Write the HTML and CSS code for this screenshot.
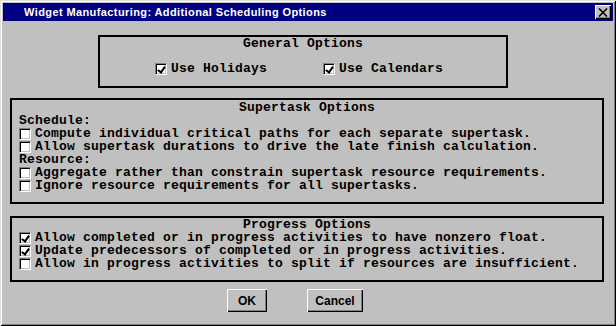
FILE: index.html
```html
<!DOCTYPE html>
<html lang="en">
    <head>
        <meta charset="utf-8">
        <title>Additional Scheduling Options</title>
        <link rel="stylesheet" href="styles.css">
    </head>
    <body>
        <div class="window">
            <div class="titleBar">
                <span class="titleText">Widget Manufacturing: Additional Scheduling Options</span>
                <span class="closeBtn">
                    <svg width="10" height="9" viewBox="0 0 10 9"><path d="M1 0.5 L9 8.5 M9 0.5 L1 8.5" stroke="#000" stroke-width="1.6"/></svg>
                </span>
            </div>

            <div class="content">
                <div class="group general">
                    <div class="groupTitle">General Options</div>
                    <div class="generalRow">
                        <label class="check"><span class="box checked"></span>Use Holidays</label>
                        <label class="check calendars"><span class="box checked"></span>Use Calendars</label>
                    </div>
                </div>

                <div class="group supertask">
                    <div class="groupTitle">Supertask Options</div>
                    <div class="line">Schedule:</div>
                    <label class="check"><span class="box"></span>Compute individual critical paths for each separate supertask.</label>
                    <label class="check"><span class="box"></span>Allow supertask durations to drive the late finish calculation.</label>
                    <div class="line">Resource:</div>
                    <label class="check"><span class="box"></span>Aggregate rather than constrain supertask resource requirements.</label>
                    <label class="check"><span class="box"></span>Ignore resource requirements for all supertasks.</label>
                </div>

                <div class="group progress">
                    <div class="groupTitle">Progress Options</div>
                    <label class="check"><span class="box checked"></span>Allow completed or in progress activities to have nonzero float.</label>
                    <label class="check"><span class="box checked"></span>Update predecessors of completed or in progress activities.</label>
                    <label class="check"><span class="box"></span>Allow in progress activities to split if resources are insufficient.</label>
                </div>

                <div class="buttonRow">
                    <button class="button ok" type="button">OK</button>
                    <button class="button cancel" type="button">Cancel</button>
                </div>
            </div>
        </div>
    </body>
</html>
```

FILE: styles.css
```css
* {
    box-sizing: border-box;
}

body {
    margin: 0;
    background-color: #c0c0c0;
}

.window {
    width: 616px;
    height: 326px;
    padding: 3px;
    background-color: #c0c0c0;
    box-shadow: inset 1px 1px #dfdfdf, inset -1px -1px #000000,
                inset 2px 2px #ffffff, inset -2px -2px #808080;
}

.titleBar {
    height: 18px;
    background-color: #000080;
    display: flex;
    align-items: center;
    justify-content: space-between;
    padding-left: 21px;
    padding-right: 2px;
}

.titleText {
    color: white;
    font-family: "Liberation Sans", Arial, sans-serif;
    font-weight: bold;
    font-size: 11px;
    letter-spacing: 0.4px;
}

.closeBtn {
    width: 16px;
    height: 14px;
    background-color: #c0c0c0;
    display: flex;
    align-items: center;
    justify-content: center;
    box-shadow: inset 1px 1px #ffffff, inset -1px -1px #000000,
                inset -2px -2px #808080;
}

.content {
    padding: 0 9px 0 7px;
    font-family: "Liberation Mono", "DejaVu Sans Mono", monospace;
    font-size: 13px;
    line-height: 13px;
    font-weight: bold;
    letter-spacing: 0.2px;
    color: black;
}

.group {
    border: 2px solid black;
}

.groupTitle {
    text-align: center;
    height: 13px;
}

.general {
    width: 410px;
    margin-top: 14px;
    margin-left: 88px;
    padding-bottom: 11px;
}

.generalRow {
    display: flex;
    margin-top: 12px;
    padding-left: 55px;
}

.calendars {
    margin-left: 56px;
}

.supertask {
    margin-top: 10px;
    padding: 1px 0 10px 7px;
}

.supertask .groupTitle {
    margin-left: -7px;
}

.progress {
    margin-top: 12px;
    padding: 0 0 10px 7px;
}

.progress .groupTitle {
    margin-left: -7px;
}

.line {
    height: 13px;
}

.check {
    display: flex;
    align-items: center;
    height: 13px;
    white-space: pre;
}

.box {
    width: 12px;
    height: 12px;
    margin-right: 4px;
    background-color: white;
    border: 1px solid;
    border-color: #808080 #ffffff #ffffff #808080;
    box-shadow: inset 1px 1px #000000, inset -1px -1px #c0c0c0;
    flex-shrink: 0;
    position: relative;
}

.box.checked::after {
    content: "";
    position: absolute;
    left: 3px;
    top: 1px;
    width: 3px;
    height: 6px;
    border: solid black;
    border-width: 0 2px 2px 0;
    transform: rotate(35deg);
}

.buttonRow {
    display: flex;
    margin-top: 7px;
    padding-left: 217px;
}

.button {
    height: 23px;
    font-family: "Liberation Sans", Arial, sans-serif;
    font-weight: bold;
    font-size: 12px;
    background-color: #c0c0c0;
    border: none;
    padding: 0;
    color: black;
    box-shadow: inset 1px 1px #ffffff, inset -1px -1px #000000,
                inset -2px -2px #808080;
}

.ok {
    width: 40px;
}

.cancel {
    width: 56px;
    margin-left: 40px;
}
```
